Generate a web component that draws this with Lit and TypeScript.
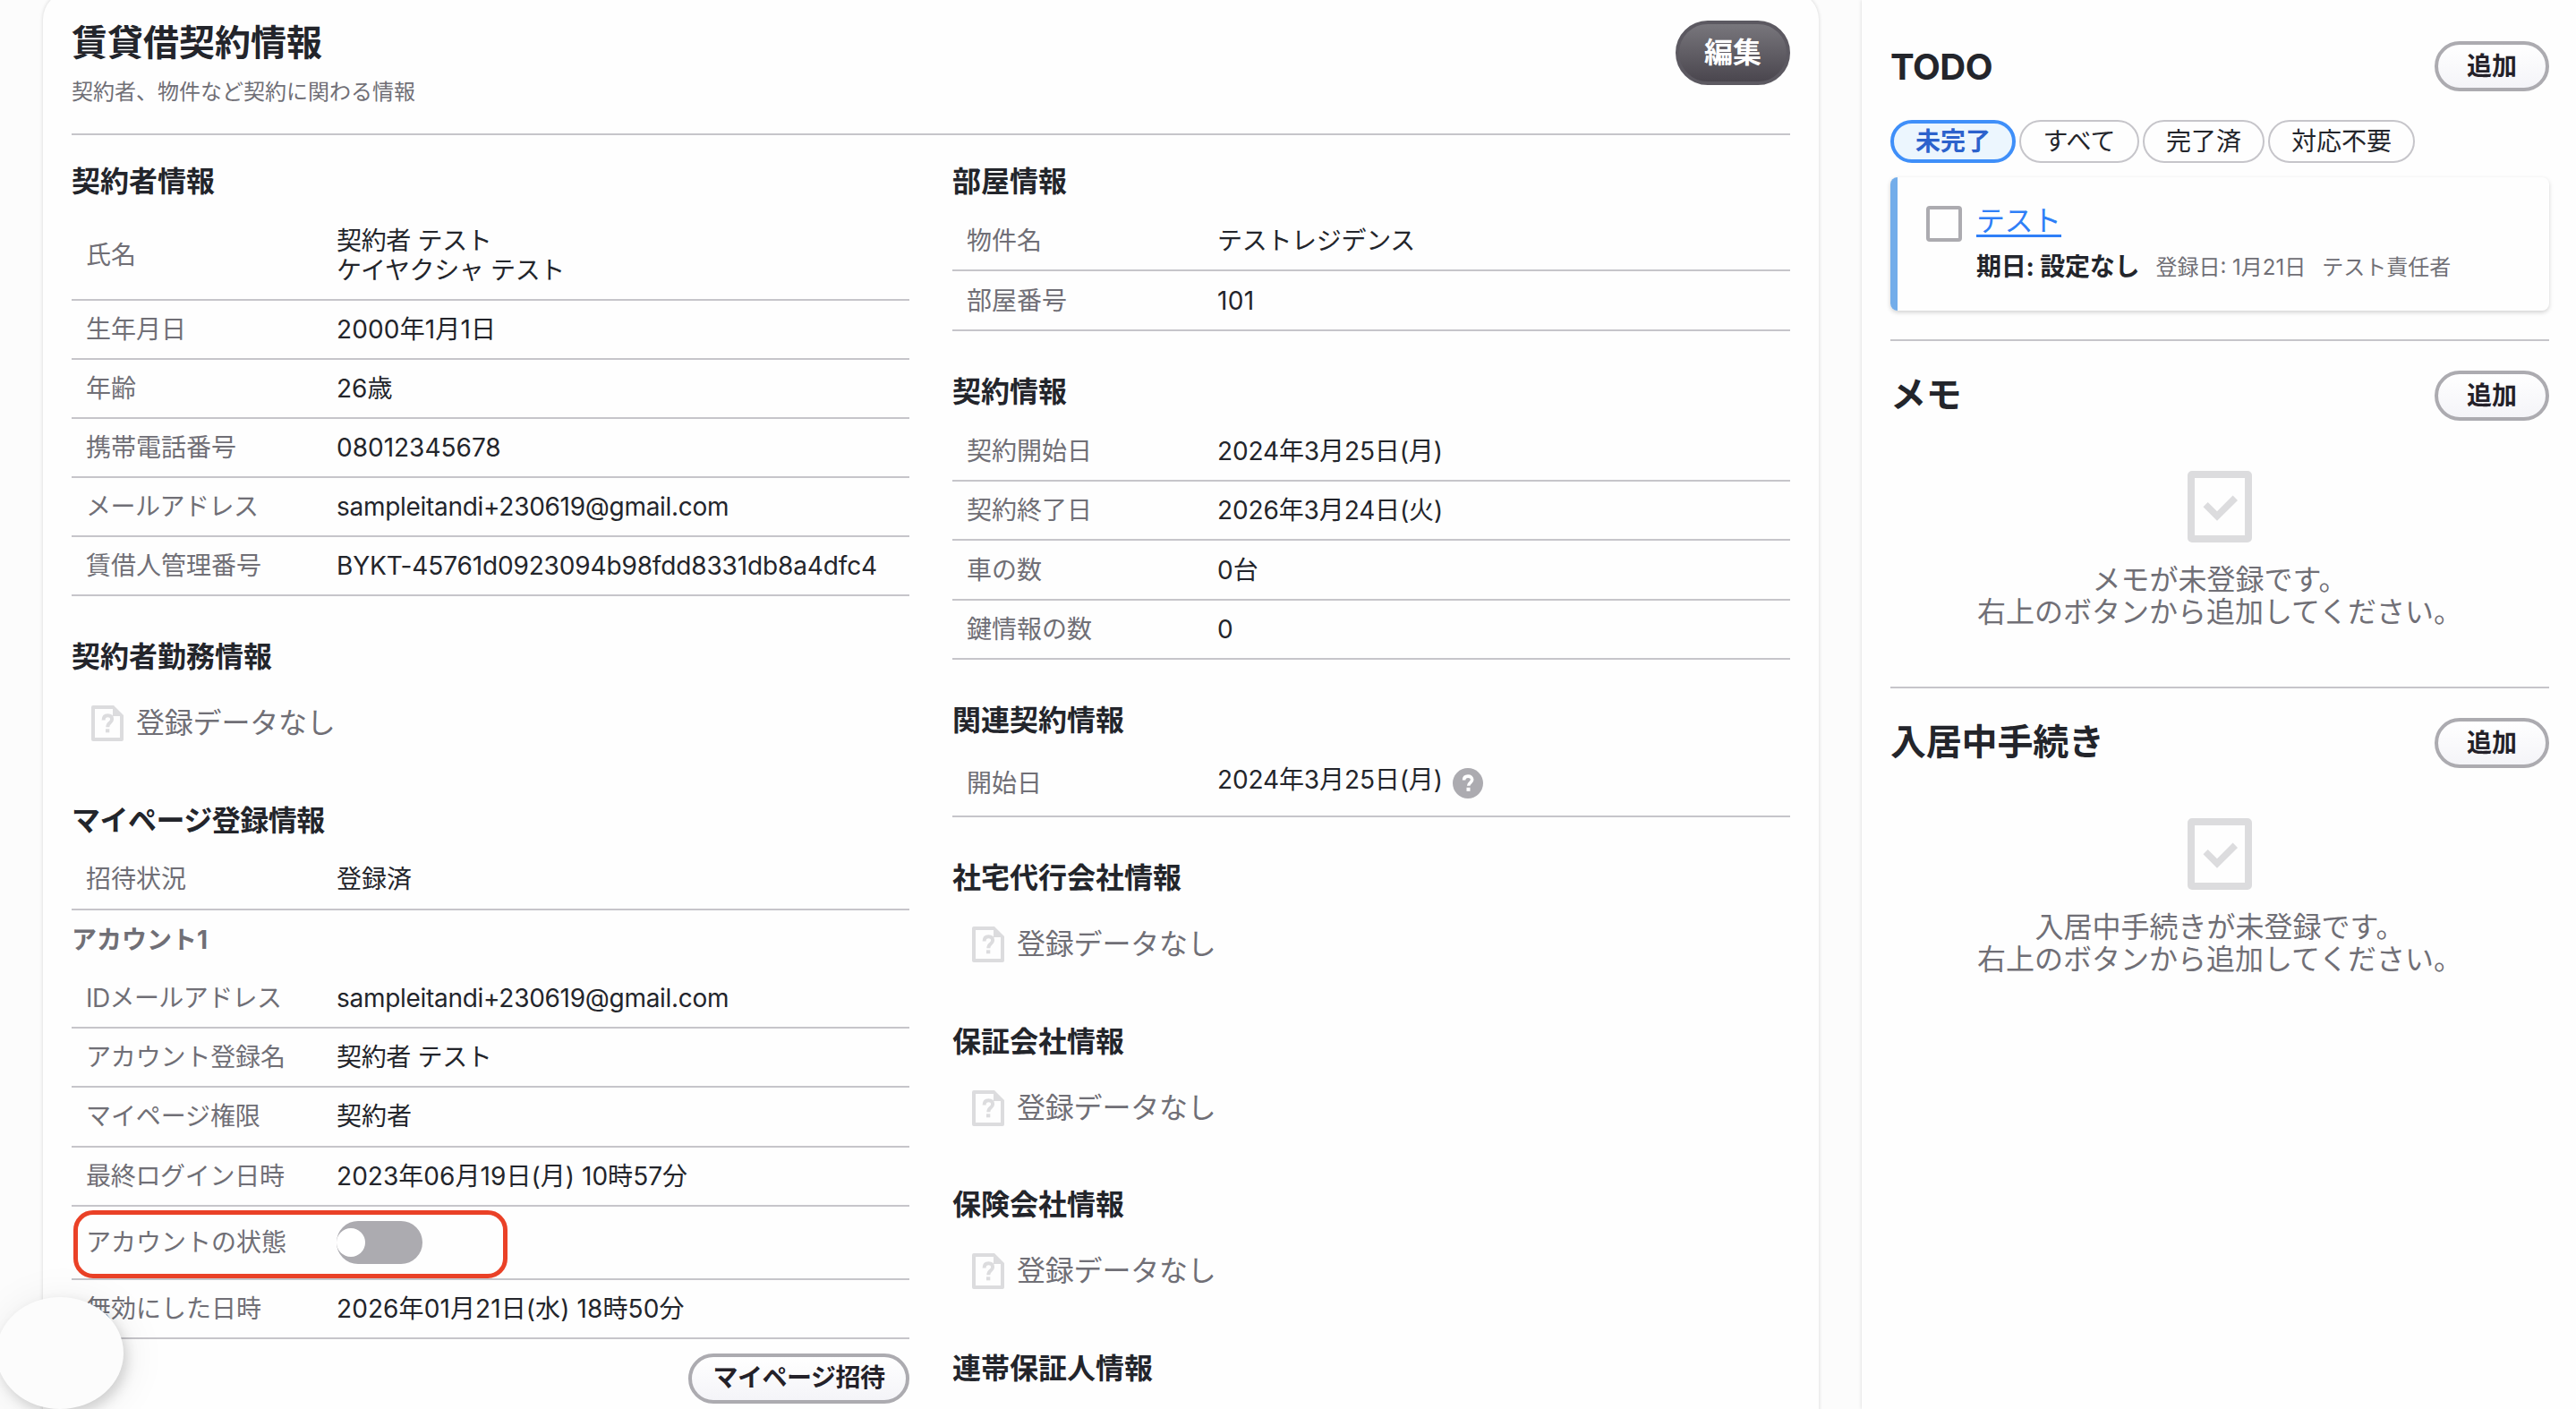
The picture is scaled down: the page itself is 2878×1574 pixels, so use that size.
import { LitElement, html, css, svg, nothing, TemplateResult } from "lit";
import { customElement } from "lit/decorators.js";
import { styleMap } from "lit/directives/style-map.js";

type Row = {
  label: string;
  value?: string[];
  h?: number;
  kind?: "help" | "toggle" | "sub";
  labelTracking?: number;
  tracking?: number;
};
type Block = { title: string; rows?: Row[]; invite?: boolean; tracking?: number };

const LEFT: Block[] = [
  {
    title: "契約者情報",
    rows: [
      { label: "氏名", value: ["契約者 テスト", "ケイヤクシャ テスト"], h: 100, tracking: -0.35 },
      { label: "生年月日", value: ["2000年1月1日"], tracking: 0.15 },
      { label: "年齢", value: ["26歳"] },
      { label: "携帯電話番号", value: ["08012345678"] },
      { label: "メールアドレス", value: ["sampleitandi+230619@gmail.com"], labelTracking: -0.5, tracking: -0.29 },
      { label: "賃借人管理番号", value: ["BYKT-45761d0923094b98fdd8331db8a4dfc4"], tracking: -0.14 },
    ],
  },
  { title: "契約者勤務情報" },
  {
    title: "マイページ登録情報",
    tracking: -0.5,
    invite: true,
    rows: [
      { label: "招待状況", value: ["登録済"], h: 67 },
      { label: "アカウント1", kind: "sub" },
      { label: "IDメールアドレス", value: ["sampleitandi+230619@gmail.com"], labelTracking: -0.6, tracking: -0.29 },
      { label: "アカウント登録名", value: ["契約者 テスト"], labelTracking: -0.15, tracking: -0.35 },
      { label: "マイページ権限", value: ["契約者"], h: 67, labelTracking: -0.1 },
      { label: "最終ログイン日時", value: ["2023年06月19日(月) 10時57分"], labelTracking: -0.3, tracking: 0.05 },
      { label: "アカウントの状態", kind: "toggle", h: 82 },
      { label: "無効にした日時", value: ["2026年01月21日(水) 18時50分"], tracking: 0.1 },
    ],
  },
];

const RIGHT: Block[] = [
  {
    title: "部屋情報",
    rows: [
      { label: "物件名", value: ["テストレジデンス"], h: 67, tracking: -0.3 },
      { label: "部屋番号", value: ["101"], h: 67, tracking: 0.4 },
    ],
  },
  {
    title: "契約情報",
    rows: [
      { label: "契約開始日", value: ["2024年3月25日(月)"], h: 67, tracking: -0.12 },
      { label: "契約終了日", value: ["2026年3月24日(火)"], tracking: -0.12 },
      { label: "車の数", value: ["0台"], h: 67 },
      { label: "鍵情報の数", value: ["0"] },
    ],
  },
  {
    title: "関連契約情報",
    rows: [{ label: "開始日", value: ["2024年3月25日(月)"], kind: "help", h: 75, tracking: -0.12 }],
  },
  { title: "社宅代行会社情報" },
  { title: "保証会社情報" },
  { title: "保険会社情報" },
  { title: "連帯保証人情報", rows: [] },
];

const track = (n?: number) => (n ? { letterSpacing: `${n}px` } : {});

const questionMark = svg`<path d="M13.600 16.600c0-3.400 1.800-5.300 4.800-5.300s4.700 1.700 4.700 4.200c0 2-1 2.900-2.400 4-1.500 1.200-2.400 2-2.400 4.700" fill="none" stroke="currentColor" stroke-width="4"/><rect x="16" y="26.300" width="4.300" height="4" fill="currentColor"/>`;

@customElement("app-root")
export class AppRoot extends LitElement {
  static styles = css`
    :host {
      display: block;
      color: #23252b;
      font-family: Inter, "Noto Sans CJK JP", sans-serif;
      font-size: 28px;
      line-height: 33px;
    }
    * { box-sizing: border-box; }
    .page {
      position: relative;
      display: flex;
      justify-content: space-between;
      height: 1574px;
      overflow: hidden;
      background: #fcfcfc;
    }
    .contract {
      width: 1984px;
      height: 1640px;
      margin: -10px 0 0 48px;
      padding: 33px 32px 0;
      border-radius: 32px;
      background: #fefefe;
      box-shadow: 0 0 4px rgba(0, 0, 0, 0.16);
    }
    .head {
      display: flex;
      justify-content: space-between;
      height: 128px;
      border-bottom: 2px solid #c6c5ca;
    }
    h1, h2, h3, p { margin: 0; }
    h1 { padding-top: 1px; font-size: 40px; line-height: 48px; font-weight: 700; }
    .lead { margin-top: 17px; font-size: 24px; line-height: 28px; color: #706f76; }
    .edit {
      display: flex;
      align-items: center;
      justify-content: center;
      width: 128px;
      height: 72px;
      padding-bottom: 2px;
      border: 4px solid #5c5961;
      border-radius: 36px;
      background: linear-gradient(#78767c, #4a464e);
      color: #fff;
      font-size: 32px;
      font-weight: 700;
    }
    .columns { display: grid; grid-template-columns: 936px 936px; gap: 48px; padding-top: 31px; }
    .column { display: flex; flex-direction: column; gap: 47px; }
    h3 { padding-top: 1px; margin-bottom: 13px; font-size: 32px; line-height: 40px; font-weight: 700; }
    .row {
      display: flex;
      align-items: center;
      height: 66px;
      padding: 1px 0 0 16px;
      border-bottom: 2px solid #c6c5ca;
    }
    .sub { padding-left: 0; border: none; font-weight: 700; color: #706f76; }
    .label { width: 280px; color: #706f76; }
    .value { display: flex; flex-direction: column; }
    .help { flex-direction: row; gap: 11px; margin-top: -3px; }
    .help svg { margin-top: 3px; }
    .toggle { width: 96px; height: 48px; padding: 8px 0; border-radius: 24px; background: #acabb0; }
    .knob { width: 32px; height: 32px; border-radius: 50%; background: #fff; }
    .none {
      display: flex;
      align-items: center;
      gap: 14px;
      height: 81.6px;
      padding: 1px 0 0 22px;
      font-size: 32px;
      letter-spacing: -0.2px;
      color: #706f76;
    }
    .none svg { color: #dcdcde; }
    .none span { padding-bottom: 1px; }
    .pill {
      display: flex;
      align-items: center;
      justify-content: center;
      width: 128px;
      height: 56px;
      border: 4px solid #acabb0;
      border-radius: 28px;
      background: linear-gradient(#fff, #f4f4f8);
      color: #242129;
      font-weight: 700;
      white-space: nowrap;
    }
    .invite { width: 247px; margin: 16px 0 0 auto; letter-spacing: -0.5px; }
    .side {
      width: 798px;
      padding: 46px 30px 0 32px;
      background: #fefefe;
      box-shadow: 0 0 4px rgba(0, 0, 0, 0.16);
    }
    .bar { display: flex; align-items: center; justify-content: space-between; }
    h2 { font-size: 40px; line-height: 48px; font-weight: 700; letter-spacing: -0.2px; }
    .todo { padding-top: 2px; letter-spacing: -0.5px; }
    .filters { display: flex; gap: 4px; margin-top: 32px; }
    .chip {
      display: flex;
      align-items: center;
      justify-content: center;
      width: 136px;
      height: 48px;
      border: 2px solid #c6c5ca;
      border-radius: 24px;
    }
    .chip.on { width: 140px; border: 4px solid #3f8ff9; background: #ecf6fe; color: #2c62cc; font-weight: 700; }
    .chip.all { width: 134px; }
    .chip.wide { width: 164px; }
    .task {
      display: flex;
      gap: 16px;
      height: 149px;
      margin-top: 16px;
      padding: 32px 0 0 32px;
      border-left: 8px solid #73adea;
      border-radius: 8px;
      box-shadow: 0 2px 5px rgba(0, 0, 0, 0.18);
    }
    .check { width: 40px; height: 40px; border: 4px solid #acabb0; border-radius: 4px; }
    .link {
      display: inline-block;
      padding-top: 2px;
      font-size: 32px;
      line-height: 30px;
      letter-spacing: -0.5px;
      color: #2f7ff7;
      border-bottom: 3px solid #2f7ff7;
    }
    .meta { display: flex; align-items: center; gap: 18px; margin-top: 17px; font-size: 24px; color: #706f76; }
    .due { font-size: 28px; font-weight: 700; color: #23252b; letter-spacing: -0.2px; }
    .panel { margin-top: 32px; padding-top: 33px; border-top: 2px solid #c6c5ca; height: 356px; }
    .panel h2 { padding-bottom: 2px; }
    .blank {
      display: flex;
      flex-direction: column;
      align-items: center;
      padding-top: 56px;
      font-size: 32px;
      line-height: 36px;
      color: #706f76;
      text-align: center;
    }
    .blank svg { margin-bottom: 24px; }
    .mark {
      position: absolute;
      left: 82px;
      top: 1352px;
      width: 485px;
      height: 76px;
      border: 5px solid #ea4127;
      border-radius: 22px;
    }
    .bubble {
      position: absolute;
      left: -4px;
      top: 1449px;
      width: 142px;
      height: 125px;
      border-radius: 50%;
      background: #fcfcfc;
      box-shadow: 4px 6px 14px rgba(0, 0, 0, 0.15), 4px 4px 48px rgba(0, 0, 0, 0.08);
    }
  `;

  private renderRow(r: Row): TemplateResult {
    if (r.kind === "sub") return html`<div class="row sub">${r.label}</div>`;
    return html`<div class="row" style=${styleMap(r.h ? { height: `${r.h}px` } : {})}>
      <div class="label" style=${styleMap(track(r.labelTracking))}>${r.label}</div>
      ${r.kind === "toggle"
        ? html`<div class="toggle"><div class="knob"></div></div>`
        : html`<div class="value ${r.kind === "help" ? "help" : ""}" style=${styleMap(track(r.tracking))}>
            ${r.value!.map((v) => html`<div>${v}</div>`)}
            ${r.kind === "help"
              ? html`<svg width="34" height="34" viewBox="0 0 34 34">
                  <circle cx="17" cy="17" r="17" fill="#acabb0" />
                  <path d="M12.600 13.600c0-3 1.900-4.500 4.500-4.500s4.600 1.500 4.600 4c0 3.200-4 3.300-4 6.600" fill="none" stroke="#fff" stroke-width="3.600" />
                  <rect x="15.500" y="21.800" width="4" height="4" fill="#fff" />
                </svg>`
              : nothing}
          </div>`}
    </div>`;
  }

  private renderBlock(b: Block): TemplateResult {
    return html`<section>
      <h3 style=${styleMap(track(b.tracking))}>${b.title}</h3>
      ${b.rows
        ? b.rows.map((r) => this.renderRow(r))
        : html`<div class="none">
            <svg width="36" height="40" viewBox="0 0 36 40">
              <path fill="currentColor" fill-rule="evenodd" d="M2 0H25L36 11V38a2 2 0 0 1-2 2H2a2 2 0 0 1-2-2V2a2 2 0 0 1 2-2zM4 4V36H32V12H24V4z" />
              ${questionMark}
            </svg>
            <span>登録データなし</span>
          </div>`}
      ${b.invite ? html`<div class="pill invite">マイページ招待</div>` : nothing}
    </section>`;
  }

  private renderPanel(title: string): TemplateResult {
    return html`<section class="panel">
      <div class="bar"><h2>${title}</h2><div class="pill">追加</div></div>
      <div class="blank">
        <svg width="72" height="80" viewBox="0 0 72 80">
          <rect x="4" y="4" width="64" height="72" rx="1" fill="none" stroke="#dcdcde" stroke-width="8" />
          <path d="M17.500 40.200L22.700 35L33 45.200L50.600 27.600L56 33L33 55.700Z" fill="#dcdcde" />
        </svg>
        <div>${title}が未登録です。</div>
        <div>右上のボタンから追加してください。</div>
      </div>
    </section>`;
  }

  render() {
    return html`<div class="page">
      <main class="contract">
        <header class="head">
          <div><h1>賃貸借契約情報</h1><p class="lead">契約者、物件など契約に関わる情報</p></div>
          <div class="edit">編集</div>
        </header>
        <div class="columns">
          <div class="column">${LEFT.map((b) => this.renderBlock(b))}</div>
          <div class="column">${RIGHT.map((b) => this.renderBlock(b))}</div>
        </div>
      </main>
      <aside class="side">
        <div class="bar"><h2 class="todo">TODO</h2><div class="pill">追加</div></div>
        <div class="filters">
          <div class="chip on">未完了</div>
          <div class="chip all">すべて</div>
          <div class="chip">完了済</div>
          <div class="chip wide">対応不要</div>
        </div>
        <div class="task">
          <div class="check"></div>
          <div>
            <div class="link">テスト</div>
            <div class="meta"><span class="due">期日: 設定なし</span><span>登録日: 1月21日</span><span>テスト責任者</span></div>
          </div>
        </div>
        ${this.renderPanel("メモ")}${this.renderPanel("入居中手続き")}
      </aside>
      <div class="mark"></div>
      <div class="bubble"></div>
    </div>`;
  }
}
